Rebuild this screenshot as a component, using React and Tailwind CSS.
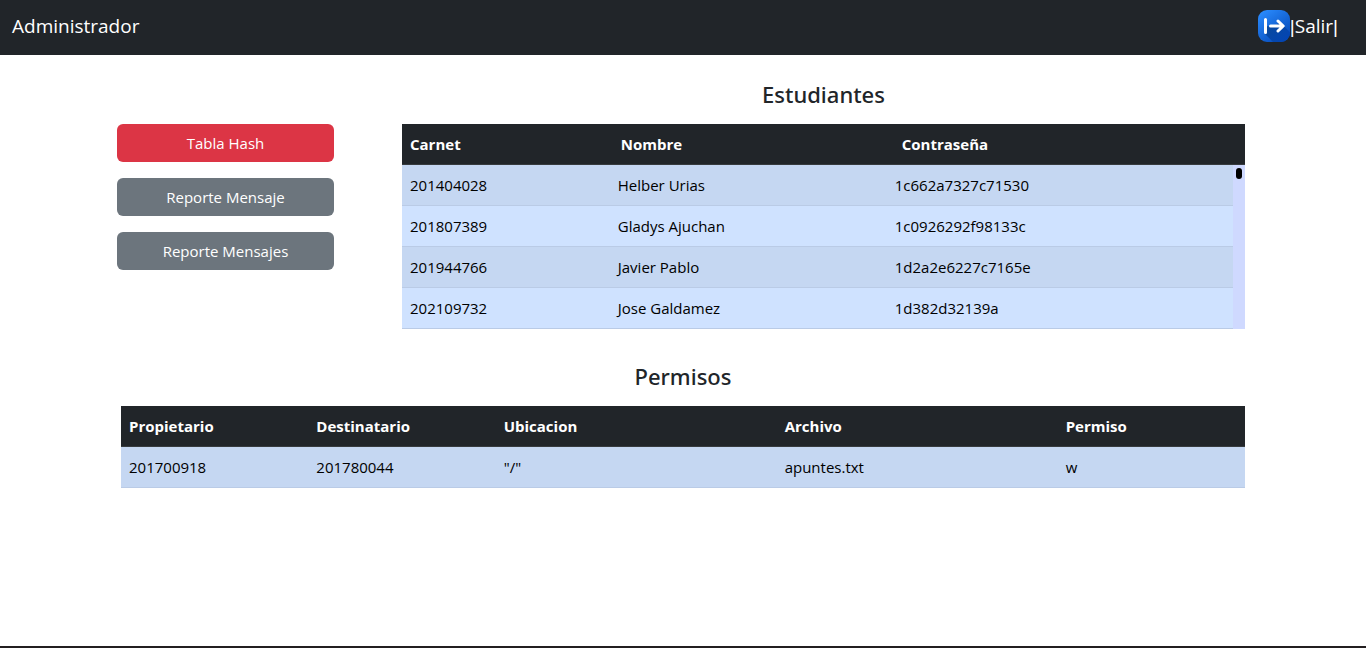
const students = [
  ['201404028', 'Helber Urias', '1c662a7327c71530'],
  ['201807389', 'Gladys Ajuchan', '1c0926292f98133c'],
  ['201944766', 'Javier Pablo', '1d2a2e6227c7165e'],
  ['202109732', 'Jose Galdamez', '1d382d32139a'],
];

const permissions = [['201700918', '201780044', '"/"', 'apuntes.txt', 'w']];

const studentColumns = [
  { label: 'Carnet', span: 'col-span-3' },
  { label: 'Nombre', span: 'col-span-4' },
  { label: 'Contraseña', span: 'col-span-5' },
];

const permissionColumns = [
  { label: 'Propietario', span: 'col-span-2' },
  { label: 'Destinatario', span: 'col-span-2' },
  { label: 'Ubicacion', span: 'col-span-3' },
  { label: 'Archivo', span: 'col-span-3' },
  { label: 'Permiso', span: 'col-span-2' },
];

function ExitIcon() {
  return (
    <svg className="size-8" viewBox="0 0 32 32" fill="none" aria-hidden="true">
      <defs>
        <linearGradient id="exit-bg" x1="4" y1="0" x2="28" y2="32" gradientUnits="userSpaceOnUse">
          <stop stopColor="#2a8cff" />
          <stop offset="1" stopColor="#0345b4" />
        </linearGradient>
        <linearGradient id="exit-shade" x1="10" y1="14" x2="26" y2="32" gradientUnits="userSpaceOnUse">
          <stop stopColor="#0a4a9c" />
          <stop offset="1" stopColor="#0345b4" />
        </linearGradient>
      </defs>
      <rect width="32" height="32" rx="9" fill="url(#exit-bg)" />
      <path d="M6.6 23.6 15 32h8a9 9 0 0 0 9-9v-.8L21.5 11.4l-4.2 4.8H9v-6.4z" fill="url(#exit-shade)" />
      <path
        d="M7.5 9.6v13M12.5 16h12M20 11l5.200 5-5.200 5"
        stroke="#fff"
        strokeWidth="3"
        strokeLinecap="round"
        strokeLinejoin="round"
      />
    </svg>
  );
}

function SectionTitle({ id, children }) {
  return (
    <h2
      id={id}
      className="mb-[14px] text-center font-['Noto_Sans','Open_Sans',sans-serif] text-[22px] leading-8 font-medium"
    >
      {children}
    </h2>
  );
}

function DataTable({ labelledBy, columns, rows, scroll }) {
  return (
    <div className="relative">
      <table aria-labelledby={labelledBy} className="block w-full text-left text-[15px] leading-6">
        <thead className="block bg-[#212529] text-white">
          <tr className="grid grid-cols-12 border-b border-[#373b3e]">
            {columns.map((column) => (
              <th key={column.label} scope="col" className={`${column.span} p-2 font-bold`}>
                {column.label}
              </th>
            ))}
          </tr>
        </thead>
        <tbody className={scroll ? 'block max-h-[164px] overflow-hidden bg-[#cfd9ff] pr-3 text-black' : 'block text-black'}>
          {rows.map((row) => (
            <tr key={row[0]} className="grid grid-cols-12 border-b border-[#bacbe6] odd:bg-[#c5d7f2] even:bg-[#cfe2ff]">
              {row.map((cell, i) => (
                <td key={columns[i].label} className={`${columns[i].span} p-2`}>
                  {cell}
                </td>
              ))}
            </tr>
          ))}
        </tbody>
      </table>
      {scroll && (
        <div className="absolute top-11 right-[3px] h-[11px] w-[6px] rounded-full bg-black" aria-hidden="true" />
      )}
    </div>
  );
}

function ReportButton({ danger, children }) {
  return (
    <button
      type="button"
      className={`h-[38px] rounded-md text-[15px] leading-6 text-white ${danger ? 'bg-[#dc3545]' : 'bg-[#6c757d]'}`}
    >
      {children}
    </button>
  );
}

export default function App() {
  return (
    <div className="flex min-h-screen flex-col border-b-2 border-[#231f20] bg-white font-['Open_Sans','Noto_Sans',sans-serif] text-[#212529]">
      <header className="flex h-[55px] items-center justify-between bg-[#212529] pr-7 pb-[3px] pl-3 text-[19px] leading-7 text-white">
        <a href="#inicio">Administrador</a>
        <button type="button" className="flex items-center">
          <ExitIcon />
          <span className="flex items-baseline">
            <span className="font-['Liberation_Sans',sans-serif]">|</span>
            <span>Salir</span>
            <span className="font-['Liberation_Sans',sans-serif]">|</span>
          </span>
        </button>
      </header>

      <main className="mx-auto w-full max-w-[1132px] pt-[23px]">
        <div className="flex gap-[68px]">
          <nav aria-label="Reportes" className="flex w-[217px] flex-col gap-4 pt-[46px]">
            <ReportButton danger>Tabla Hash</ReportButton>
            <ReportButton>Reporte Mensaje</ReportButton>
            <ReportButton>Reporte Mensajes</ReportButton>
          </nav>
          <section className="mr-1 flex-1">
            <SectionTitle id="estudiantes">Estudiantes</SectionTitle>
            <DataTable labelledBy="estudiantes" columns={studentColumns} rows={students} scroll />
          </section>
        </div>
        <section className="mx-1 mt-[31px]">
          <SectionTitle id="permisos">Permisos</SectionTitle>
          <DataTable labelledBy="permisos" columns={permissionColumns} rows={permissions} />
        </section>
      </main>
    </div>
  );
}
